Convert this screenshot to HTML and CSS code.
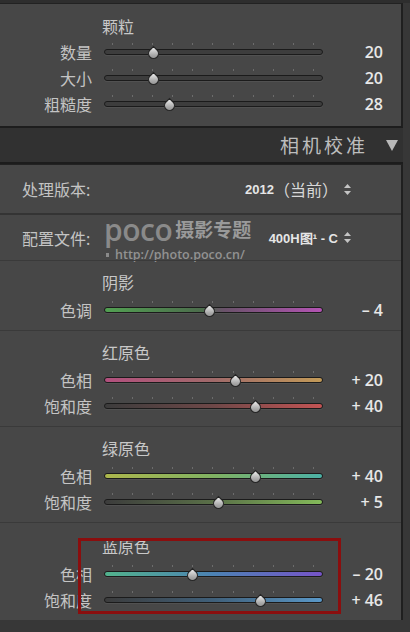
FILE: index.html
```html
<!DOCTYPE html>
<html lang="zh-CN">
<head>
    <meta charset="UTF-8">
    <meta name="viewport" content="width=device-width, initial-scale=1.0">
    <title>相机校准</title>
    <link rel="stylesheet" href="styles.css">
</head>
<body>
    <div class="frame">
        <!-- 颗粒 -->
        <section class="panel grain">
            <h3 class="group-title">颗粒</h3>
            <div class="row">
                <span class="label">数量</span>
                <div class="slider"><div class="track t-plain"></div><span class="thumb" style="left:22.5%"></span></div>
                <span class="value">20</span>
            </div>
            <div class="row">
                <span class="label">大小</span>
                <div class="slider"><div class="track t-plain"></div><span class="thumb" style="left:22.5%"></span></div>
                <span class="value">20</span>
            </div>
            <div class="row">
                <span class="label">粗糙度</span>
                <div class="slider"><div class="track t-plain"></div><span class="thumb" style="left:30%"></span></div>
                <span class="value">28</span>
            </div>
        </section>

        <header class="section-bar">
            <span class="section-name">相机校准</span>
            <svg class="caret" width="12" height="11" viewBox="0 0 12 11"><polygon points="0,0 12,0 6,11" fill="#b9b9b9"/></svg>
        </header>

        <section class="panel calib">
            <div class="setting">
                <span class="setting-label">处理版本:</span>
                <span class="setting-value"><b>2012</b>（当前）
                    <svg class="stepper" width="7" height="11" viewBox="0 0 7 11"><polygon points="3.5,0 7,4 0,4" fill="#c4c4c4"/><polygon points="0,7 7,7 3.5,11" fill="#c4c4c4"/></svg>
                </span>
            </div>
            <div class="setting profile">
                <span class="setting-label">配置文件:</span>
                <span class="setting-value"><b>400H图¹ - C</b>
                    <svg class="stepper" width="7" height="11" viewBox="0 0 7 11"><polygon points="3.5,0 7,4 0,4" fill="#c4c4c4"/><polygon points="0,7 7,7 3.5,11" fill="#c4c4c4"/></svg>
                </span>
                <div class="watermark">
                    <div class="wm-logo"><span class="wm-poco">poco</span><span class="wm-cn">摄影专题</span></div>
                    <div class="wm-url">http://photo.poco.cn/</div>
                </div>
            </div>

            <div class="group">
                <h3 class="group-title">阴影</h3>
                <div class="row">
                    <span class="label">色调</span>
                    <div class="slider"><div class="track t-tint"></div><span class="thumb" style="left:48%"></span></div>
                    <span class="value">– 4</span>
                </div>
            </div>

            <div class="group">
                <h3 class="group-title">红原色</h3>
                <div class="row">
                    <span class="label">色相</span>
                    <div class="slider"><div class="track t-red-hue"></div><span class="thumb" style="left:60%"></span></div>
                    <span class="value">+ 20</span>
                </div>
                <div class="row">
                    <span class="label">饱和度</span>
                    <div class="slider"><div class="track t-red-sat"></div><span class="thumb" style="left:69%"></span></div>
                    <span class="value">+ 40</span>
                </div>
            </div>

            <div class="group">
                <h3 class="group-title">绿原色</h3>
                <div class="row">
                    <span class="label">色相</span>
                    <div class="slider"><div class="track t-green-hue"></div><span class="thumb" style="left:69%"></span></div>
                    <span class="value">+ 40</span>
                </div>
                <div class="row">
                    <span class="label">饱和度</span>
                    <div class="slider"><div class="track t-green-sat"></div><span class="thumb" style="left:52.5%"></span></div>
                    <span class="value">+ 5</span>
                </div>
            </div>

            <div class="group blue">
                <h3 class="group-title">蓝原色</h3>
                <div class="row">
                    <span class="label">色相</span>
                    <div class="slider"><div class="track t-blue-hue"></div><span class="thumb" style="left:40.5%"></span></div>
                    <span class="value">– 20</span>
                </div>
                <div class="row">
                    <span class="label">饱和度</span>
                    <div class="slider"><div class="track t-blue-sat"></div><span class="thumb" style="left:71.5%"></span></div>
                    <span class="value">+ 46</span>
                </div>
                <div class="highlight-box"></div>
            </div>
        </section>
    </div>
</body>
</html>
```

FILE: styles.css
```css
/* Estilos base */
* {
    margin: 0;
    padding: 0;
    box-sizing: border-box;
}

body {
    width: 410px;
    height: 632px;
    overflow: hidden;
    background: #2c2c2c;
    font-family: "Noto Sans", "Noto Sans CJK SC", sans-serif;
    color: #c6c6c6;
}

.frame {
    height: 632px;
    padding-right: 7px;
    background: #373737;
    border-top: 3px solid #2e2e2e;
}

.panel {
    background: #474747;
    border-top: 1px solid #222;
    border-right: 2px solid #1f1f1f;
}

.grain {
    padding: 14px 0 9px;
    border-bottom: 2px solid #1d1d1d;
}

.group-title {
    height: 18px;
    margin: 0 0 3px 102px;
    font-size: 16px;
    font-weight: 400;
    line-height: 18px;
    color: #c8c8c8;
}

.row {
    display: flex;
    align-items: center;
    height: 26px;
}

.label {
    width: 92px;
    text-align: right;
    font-size: 16px;
    color: #c4c4c4;
}

.slider {
    position: relative;
    display: flex;
    align-items: center;
    width: 219px;
    height: 26px;
    margin-left: 12px;
}

/* tick marks above the track */
.slider::before {
    content: "";
    position: absolute;
    left: 8px;
    top: calc(50% - 9px);
    width: 202px;
    height: 2px;
    background: repeating-linear-gradient(to right, #6c6c6c 0 1px, transparent 1px 20.1px);
}

.track {
    width: 100%;
    height: 6px;
    border: 1px solid #1b1b1b;
    border-radius: 3px;
    box-shadow: 0 1px 0 rgba(255, 255, 255, 0.06);
}

.t-plain { background: #3d3d3d; }
.t-tint { background: linear-gradient(90deg, #52a052, #4c6c4c 45%, #6a526a 55%, #b454b4); }
.t-red-hue { background: linear-gradient(90deg, #b2507e, #a06a6a 50%, #c29a58); }
.t-red-sat { background: linear-gradient(90deg, #3c3c3c, #6e4848 50%, #c45454); }
.t-green-hue { background: linear-gradient(90deg, #acb64c, #80b262 50%, #4cb2a6); }
.t-green-sat { background: linear-gradient(90deg, #3c3c3c, #5a7048 50%, #84ba5a); }
.t-blue-hue { background: linear-gradient(90deg, #52b28c, #4c82b4 50%, #7654c8); }
.t-blue-sat { background: linear-gradient(90deg, #3c3c3c, #40607a 50%, #5a98c8); }

/* drop-shaped knob */
.thumb {
    position: absolute;
    top: calc(50% - 4.5px);
    width: 11px;
    height: 11px;
    margin-left: -5.5px;
    border: 1px solid #262626;
    border-radius: 0 50% 50% 50%;
    background: linear-gradient(135deg, #f0f0f0, #ababab 60%, #8a8a8a);
    transform: rotate(45deg);
}

.value {
    width: 60px;
    text-align: right;
    font-family: "Open Sans", sans-serif;
    font-size: 16px;
    font-weight: 600;
    color: #e8e8e8;
}

.section-bar {
    display: flex;
    align-items: center;
    justify-content: flex-end;
    height: 36px;
    padding-right: 5px;
    background: #313131;
    border-bottom: 2px solid #1c1c1c;
}

.section-name {
    font-size: 19px;
    letter-spacing: 3px;
    color: #bdbdbd;
}

.caret {
    margin-left: 18px;
}

.setting {
    position: relative;
    display: flex;
    align-items: center;
    justify-content: space-between;
    height: 48px;
    padding: 0 50px 0 22px;
}

.setting + .setting {
    height: 47px;
    border-top: 2px solid #343434;
}

.setting-label {
    font-size: 16px;
    color: #c4c4c4;
}

.setting-value {
    display: flex;
    align-items: center;
    font-size: 16px;
    color: #d8d8d8;
}

.setting-value b {
    font-family: "Liberation Sans", sans-serif;
    font-size: 13px;
    color: #e6e6e6;
}

.stepper {
    margin-left: 6px;
}

.watermark {
    position: absolute;
    left: 104px;
    top: 0;
    color: #8e8e8e;
}

.wm-logo {
    display: flex;
    align-items: center;
    height: 30px;
    line-height: 30px;
}

.wm-poco {
    font-family: "Open Sans", sans-serif;
    font-size: 30px;
    font-weight: 600;
    letter-spacing: -0.5px;
    color: #8a8a8a;
}

.wm-cn {
    margin-left: 3px;
    font-size: 19px;
    font-weight: 700;
    color: #9a9a9a;
}

.wm-url {
    display: flex;
    align-items: center;
    margin: 4px 0 0 2px;
    font-family: "Open Sans", sans-serif;
    font-size: 12.5px;
    font-weight: 600;
    line-height: 12px;
    color: #929292;
}

.wm-url::before {
    content: "";
    width: 3px;
    height: 4px;
    margin-right: 6px;
    background: #8a8a8a;
}

.group {
    position: relative;
    padding: 12px 0 7px;
    border-top: 1px solid #3a3a3a;
}

.group .group-title {
    height: 20px;
    margin-bottom: 4px;
    line-height: 20px;
}

.blue {
    padding-top: 14px;
}

.highlight-box {
    position: absolute;
    left: 78px;
    top: 15px;
    width: 263px;
    height: 76px;
    border: 3px solid #8a0e0e;
}
```
